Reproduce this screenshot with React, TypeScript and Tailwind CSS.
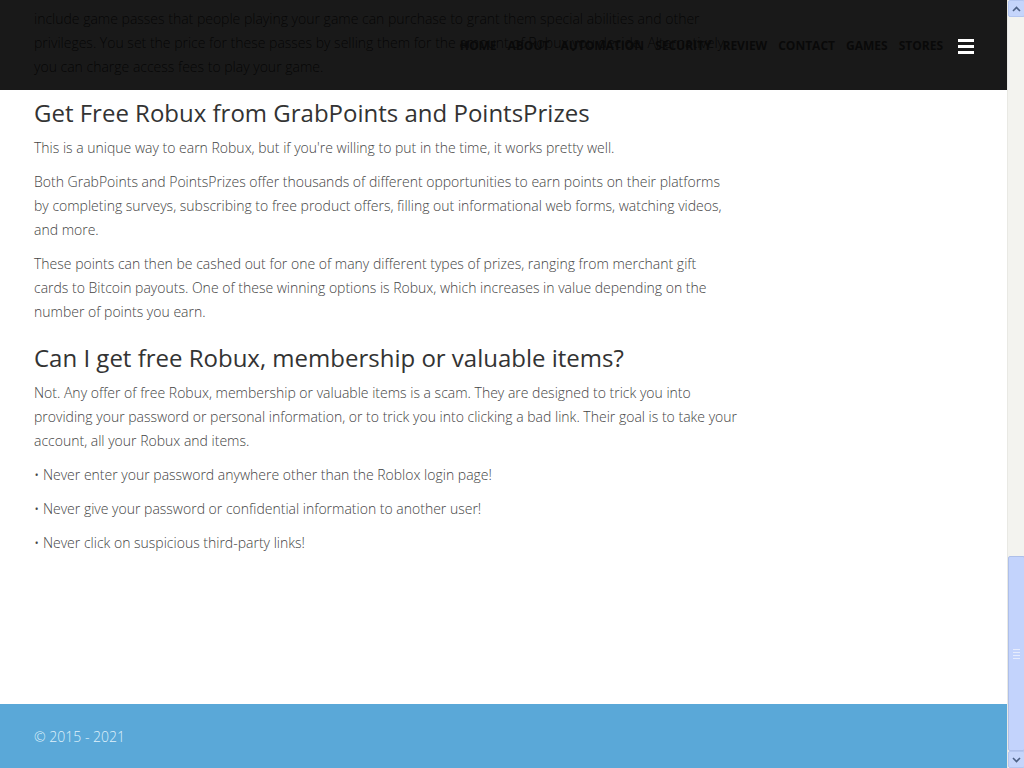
const navItems = ['Home', 'About', 'Automation', 'Security', 'Review', 'Contact', 'Games', 'Stores']

function Scrollbar () {
	return (
		<div className="w-[17px] h-full flex flex-col bg-[#f3f3ef] border-l border-[#e9e9e4]">
			<div className="h-[17px] w-[17px] flex items-center justify-center bg-[#c5d5fb] border border-[#b4c6f0] rounded-[2px]">
				<svg width="9" height="6" viewBox="0 0 9 6">
					<path d="M1 5 L4.5 1.5 L8 5" stroke="#4d6185" strokeWidth="1.6" fill="none" />
				</svg>
			</div>
			<div className="flex-1" />
			<div className="h-[195px] w-[17px] bg-[#c3d3fc] border border-[#aebfe9] rounded-[2px] flex flex-col items-center justify-center gap-[2px]">
				<div className="w-[7px] h-px bg-[#e6ecfd]" />
				<div className="w-[7px] h-px bg-[#e6ecfd]" />
				<div className="w-[7px] h-px bg-[#e6ecfd]" />
				<div className="w-[7px] h-px bg-[#e6ecfd]" />
			</div>
			<div className="h-[17px] w-[17px] flex items-center justify-center bg-[#c5d5fb] border border-[#b4c6f0] rounded-[2px]">
				<svg width="9" height="6" viewBox="0 0 9 6">
					<path d="M1 1 L4.5 4.5 L8 1" stroke="#4d6185" strokeWidth="1.6" fill="none" />
				</svg>
			</div>
		</div>
	)
}

export default function App () {
	return (
		<div className="w-screen h-screen overflow-hidden flex bg-white" style={{ fontFamily: '"Open Sans", "Liberation Sans", sans-serif' }}>
			<div className="relative w-[1007px] h-full flex flex-col">
				<header className="absolute top-0 left-0 right-0 h-[90px] bg-black/90 z-10 flex items-start justify-end pt-[37px] pr-[33px]">
					<nav className="flex items-center gap-[11px]">
						{navItems.map(item => (
							<a key={item} href="#" className="text-[12px] font-bold uppercase text-[#090909] leading-[18px]">
								{item}
							</a>
						))}
						<div className="ml-[4px] w-[16px] flex flex-col gap-[3px]">
							<div className="h-[3px] bg-white" />
							<div className="h-[3px] bg-white" />
							<div className="h-[3px] bg-white" />
						</div>
					</nav>
				</header>

				<main className="flex-1 pt-[7px] pl-[34px]">
					<div className="w-[700px] text-[14px] leading-[24px] font-light text-[#444]">
						<p className="mb-[10px]">
							include game passes that people playing your game can purchase to grant them special abilities and other privileges. You set the price for these passes by selling them for the amount of Robux you decide. Alternatively, you can charge access fees to play your game.
						</p>

						<h2 className="mt-[20px] mb-[10px] text-[24px] leading-[27px] font-normal text-[#333]">
							{'Get Free Robux from GrabPoints and PointsPrizes'}
						</h2>
						<p className="mb-[10px]">
							{'This is a unique way to earn Robux, but if you\'re willing to put in the time, it works pretty well.'}
						</p>
						<p className="mb-[10px]">
							{'Both GrabPoints and PointsPrizes offer thousands of different opportunities to earn points on their platforms by completing surveys, subscribing to free product offers, filling out informational web forms, watching videos, and more.'}
						</p>
						<p className="mb-[10px]">
							{'These points can then be cashed out for one of many different types of prizes, ranging from merchant gift cards to Bitcoin payouts. One of these winning options is Robux, which increases in value depending on the number of points you earn.'}
						</p>

						<h2 className="mt-[20px] mb-[10px] text-[24px] leading-[27px] font-normal text-[#333]">
							{'Can I get free Robux, membership or valuable items?'}
						</h2>
						<p className="mb-[10px] w-[706px]">
							{'Not. Any offer of free Robux, membership or valuable items is a scam. They are designed to trick you into providing your password or personal information, or to trick you into clicking a bad link. Their goal is to take your account, all your Robux and items.'}
						</p>
						<p className="mb-[10px]">{'• Never enter your password anywhere other than the Roblox login page!'}</p>
						<p className="mb-[10px]">{'• Never give your password or confidential information to another user!'}</p>
						<p className="mb-[10px]">{'• Never click on suspicious third-party links!'}</p>
					</div>
				</main>

				<footer className="h-[64px] bg-[#5aa8d8] flex items-center pl-[34px]">
					<p className="text-[14px] font-light text-[#dff1fb]">{'© 2015 - 2021'}</p>
				</footer>
			</div>
			<Scrollbar />
		</div>
	)
}
